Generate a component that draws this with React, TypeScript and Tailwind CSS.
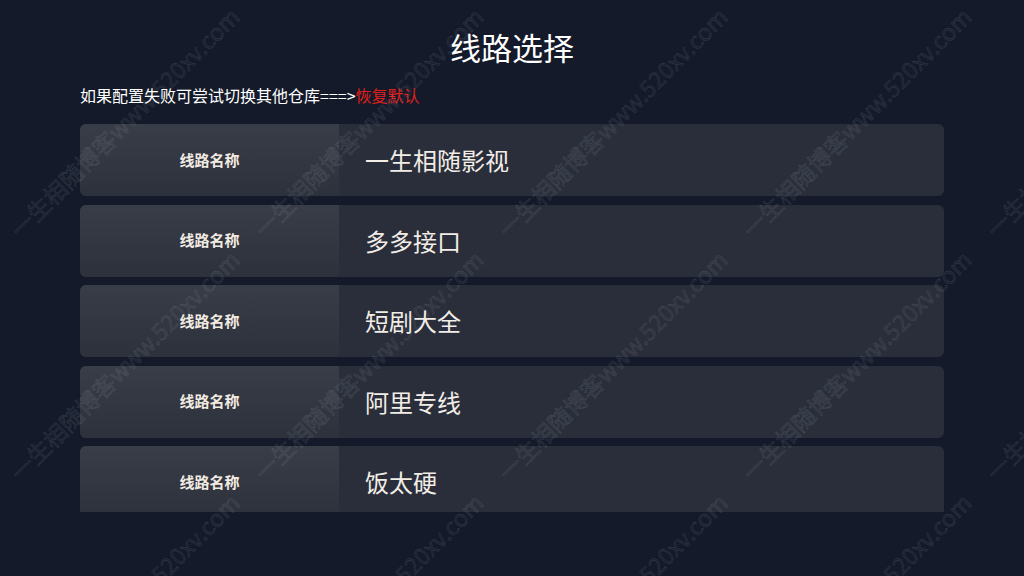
import React from "react";

const rows = ["一生相随影视", "多多接口", "短剧大全", "阿里专线", "饭太硬"];

const wmCols = [124, 368, 612, 856, 1100];
const wmRows = [122, 365, 608];

export default function App() {
  return (
    <div
      className="relative w-[1024px] h-[576px] overflow-hidden bg-[#141a29] text-white"
      style={{ fontFamily: '"Noto Sans CJK SC", "Noto Sans", sans-serif' }}
    >
      <div className="flex flex-col px-20">
        <h1 className="mt-[26px] h-[42px] text-center text-[31px] leading-[42px] font-normal text-white">
          线路选择
        </h1>
        <p className="mt-[16px] h-[22px] text-[16px] leading-[22px] text-white">
          如果配置失败可尝试切换其他仓库===&gt;<span className="text-[#e0201c]">恢复默认</span>
        </p>
        <div className="mt-[18px] h-[388px] overflow-hidden flex flex-col gap-[8.5px]">
          {rows.map((name) => (
            <div
              key={name}
              className="shrink-0 h-[72px] flex rounded-[6px] overflow-hidden bg-[#292e3a]"
            >
              <div className="w-[259px] shrink-0 flex items-center justify-center bg-gradient-to-b from-[#393d47] to-[#2c313b]">
                <span className="text-[15px] font-bold text-[#f2ebe2]">线路名称</span>
              </div>
              <div className="flex-1 flex items-center pl-[26px]">
                <span className="text-[24px] text-[#f2ede6]">{name}</span>
              </div>
            </div>
          ))}
        </div>
      </div>

      <div className="pointer-events-none absolute inset-0">
        {wmRows.map((y) =>
          wmCols.map((x) => (
            <div
              key={`${x}-${y}`}
              className="absolute w-[400px] h-[30px] -ml-[200px] -mt-[15px] flex items-center justify-center -rotate-45 whitespace-nowrap text-[23px] font-normal leading-[30px] text-[rgba(255,255,255,0.03)] [-webkit-text-stroke:0.6px_rgba(210,215,225,0.16)]"
              style={{ left: x, top: y }}
            >
              一生相随博客www.520xv.com
            </div>
          ))
        )}
      </div>
    </div>
  );
}
